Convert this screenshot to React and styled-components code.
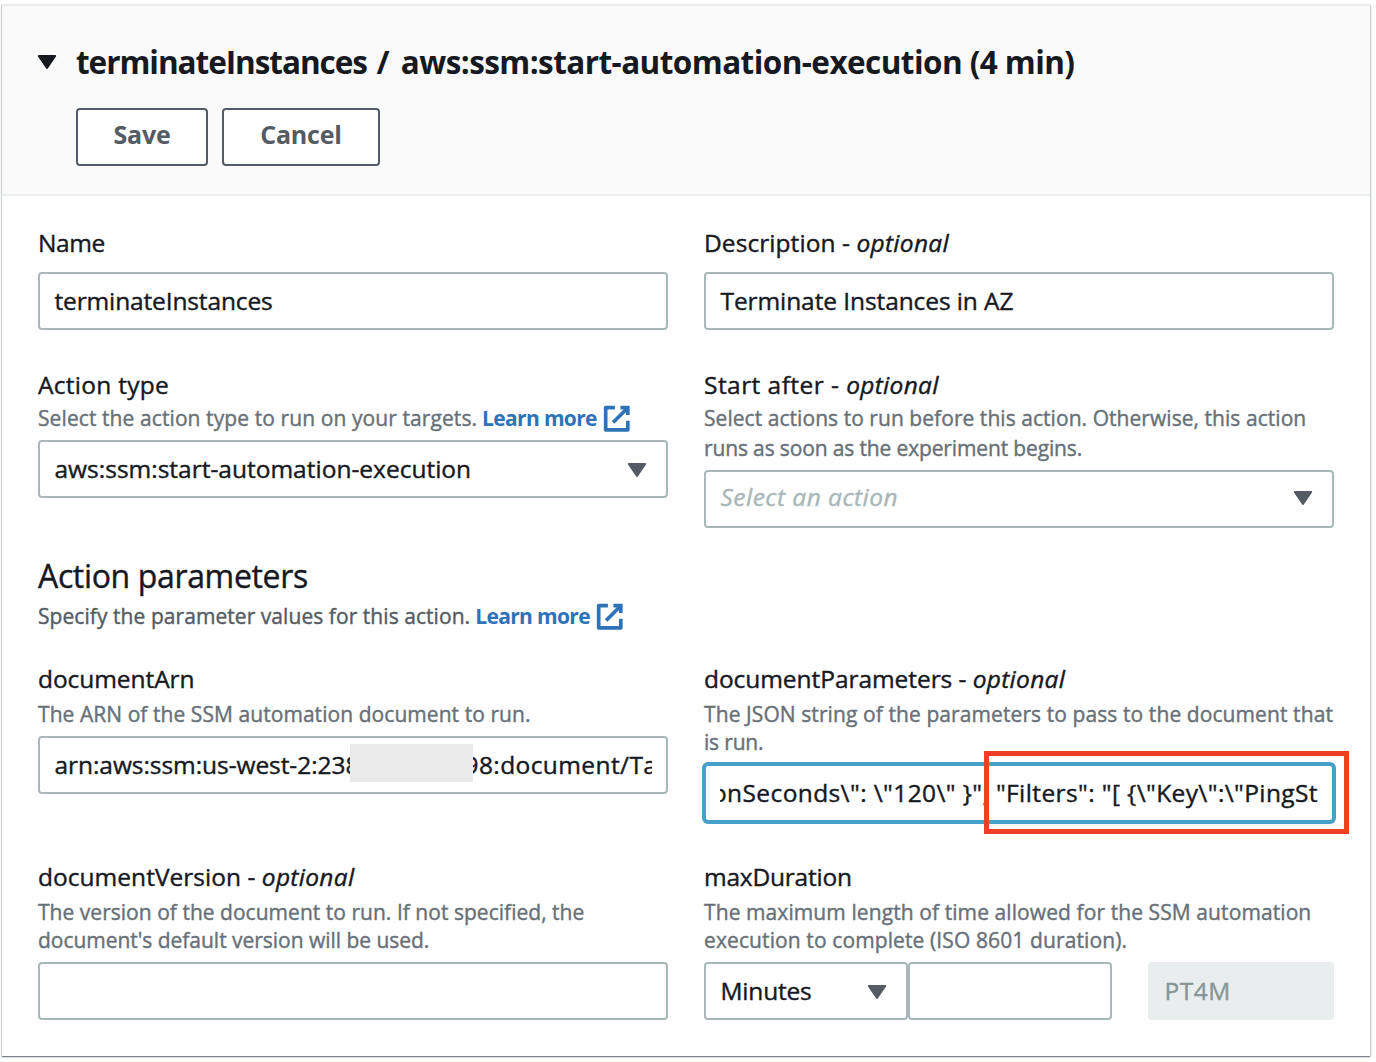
import React from 'react';
import styled, { createGlobalStyle } from 'styled-components';

const Global = createGlobalStyle`
  *, *::before, *::after { box-sizing: border-box; }
  body {
    margin: 0;
    background: #fff;
    color: #16191f;
    font-family: "Open Sans", "Noto Sans", sans-serif;
    -webkit-text-stroke: 0.4px;
  }
`;

const Page = styled.main`
  height: 1062px;
  padding: 4px 6px 6px 2px;
`;

const Card = styled.section`
  width: 1368px;
  height: 1052px;
  background: #fff;
  border-top: 2px solid #eaeded;
  box-shadow:
    0 1px 1px rgba(0, 28, 36, 0.35),
    1px 1px 2px rgba(0, 28, 36, 0.22),
    -1px 1px 1px rgba(0, 28, 36, 0.15);
`;

const Header = styled.header`
  display: flex;
  gap: 19px;
  height: 190px;
  padding: 33px 36px 28px 35px;
  background: #fafafa;
  border-bottom: 2px solid #eaeded;
`;

const HeaderMain = styled.div`
  display: flex;
  flex-direction: column;
  gap: 24px;
  padding-top: 1px;
`;

const Title = styled.h2`
  margin: 0;
  font-size: 31.5px;
  font-weight: 700;
  line-height: 44px;
  white-space: pre;
  -webkit-text-stroke: 0;
`;

const TitlePart = styled.span`
  letter-spacing: ${(p) => p.$ls}px;
`;

const Buttons = styled.div`
  display: flex;
  gap: 14px;
`;

const Button = styled.button`
  width: ${(p) => p.$width}px;
  height: 58px;
  padding: 0 0 6px;
  border: 2px solid #545b64;
  border-radius: 4px;
  background: #fff;
  color: #545b64;
  font: 700 25px "Open Sans", sans-serif;
  letter-spacing: -0.2px;
  -webkit-text-stroke: 0;
`;

const Body = styled.div`
  padding: 32px 36px 36px;
`;

const Row = styled.div`
  display: grid;
  grid-template-columns: 630px 630px;
  column-gap: 36px;
  margin-top: ${(p) => p.$gap || 0}px;
`;

const FieldBox = styled.div`
  display: flex;
  flex-direction: column;
`;

const Label = styled.div`
  height: 30px;
  font-size: 24.5px;
  line-height: 30px;
  letter-spacing: ${(p) => p.$ls || 0}px;
  white-space: pre;
`;

const Optional = styled.em`
  letter-spacing: 0.3px;
`;

const Hint = styled.div`
  margin: ${(p) => (p.$loose ? '3px 0 7px' : '6px 0 8px')};
  color: ${(p) => p.$color || '#687078'};
  font-size: 21px;
`;

const Line = styled.div`
  display: flex;
  align-items: center;
  height: ${(p) => p.$height}px;
  line-height: ${(p) => p.$height}px;
  letter-spacing: ${(p) => p.$ls || 0}px;
  white-space: pre;
`;

const Link = styled.a`
  display: flex;
  align-items: center;
  margin-left: 5px;
  color: #2e73b8;
  font-weight: 700;
  letter-spacing: -0.66px;
  -webkit-text-stroke: 0;

  svg {
    margin: 1px 0 0 5.5px;
  }
`;

const Control = styled.div`
  position: relative;
  display: flex;
  align-items: center;
  justify-content: space-between;
  width: ${(p) => (p.$width ? `${p.$width}px` : '100%')};
  height: 58px;
  margin-top: ${(p) => p.$top || 0}px;
  padding: 0 14px;
  border: 2px solid ${(p) => (p.$disabled ? '#eaeded' : p.$focused ? '#45a1c9' : '#aab7b8')};
  border-radius: 4px;
  background: ${(p) => (p.$disabled ? '#eaeded' : '#fff')};
  color: ${(p) => (p.$disabled ? '#879596' : 'inherit')};
  box-shadow: ${(p) => (p.$focused ? '0 0 0 2px #45a1c9' : 'none')};
`;

const Value = styled.div`
  display: flex;
  flex: 1;
  justify-content: ${(p) => (p.$end ? 'flex-end' : 'flex-start')};
  min-width: 0;
  height: 42px;
  margin-bottom: ${(p) => p.$lift || 1}px;
  overflow: hidden;
  font-size: 24.5px;
  line-height: 42px;
  letter-spacing: ${(p) => p.$ls || 0}px;
  text-indent: ${(p) => (p.$end ? 0 : 0.5)}px;
  white-space: pre;
`;

const Placeholder = styled.em`
  color: #aab7b8;
`;

const ArnStart = styled.span`
  flex: none;
  width: 295.5px;
  overflow: hidden;
  letter-spacing: -0.06px;
`;

const ArnEnd = styled.span`
  flex: none;
  margin-left: -8.5px;
  letter-spacing: 0.4px;
`;

const Redaction = styled.span`
  position: relative;
  z-index: 1;
  flex: none;
  width: 123px;
  height: 37.5px;
  margin-top: 0.5px;
  background: #eaeaea;
`;

const CaretBox = styled.span`
  display: flex;
  margin-right: 5px;
  margin-top: ${(p) => p.$shift}px;
`;

const HeaderCaret = styled.span`
  display: flex;
  padding-top: 15px;
  width: 20px;
  height: 31px;
`;

const Highlight = styled.div`
  position: absolute;
  top: -15px;
  left: 277.5px;
  width: 365.5px;
  height: 83px;
  border: 5px solid #ee4026;
`;

const SectionTitle = styled.h3`
  margin: 28px 0 0;
  font-size: 32px;
  font-weight: 400;
  line-height: 40px;
  letter-spacing: -0.35px;
`;

const SectionHint = styled(Hint)`
  margin: 5px 0 0;
`;

const Duration = styled.div`
  display: flex;
`;

const DurationPreview = styled.div`
  margin-left: 36px;
`;

const Caret = ({ color = '#545b64' }) => (
  <svg width="20" height="16" viewBox="0 0 20 16">
    <path d="M1.8 2h16.4L10 14z" fill={color} stroke={color} strokeWidth="2" strokeLinejoin="round" />
  </svg>
);

const External = () => (
  <svg width="29.5" height="29.5" viewBox="0 0 16 16" fill="none" stroke="#2e73b8" strokeWidth="2">
    <path d="M10 2h4v4" />
    <path d="M6 10l8-8" />
    <path d="M14 9.048V14H2V2h5" strokeLinejoin="round" />
  </svg>
);

const LearnMore = () => (
  <Link>
    Learn more
    <External />
  </Link>
);

function Field({ label, ls, optional, hint, loose, children }) {
  return (
    <FieldBox>
      <Label $ls={ls}>
        {label}
        {optional && <> - <Optional>optional</Optional></>}
      </Label>
      {hint && (
        <Hint $loose={loose}>
          {hint.map(([text, spacing, link]) => (
            <Line key={text} $height={loose ? 30 : 28} $ls={spacing}>
              {text}
              {link && <LearnMore />}
            </Line>
          ))}
        </Hint>
      )}
      {children}
    </FieldBox>
  );
}

export default function App() {
  return (
    <Page>
      <Global />
      <Card>
        <Header>
          <HeaderCaret><Caret color="#16191f" /></HeaderCaret>
          <HeaderMain>
            <Title>
              <TitlePart $ls={-1.05}>terminateInstances</TitlePart>
              <TitlePart $ls={1.5}>{' / '}</TitlePart>
              <TitlePart $ls={-0.57}>aws:ssm:start-automation-execution (4 min)</TitlePart>
            </Title>
            <Buttons>
              <Button $width={132}>Save</Button>
              <Button $width={158}>Cancel</Button>
            </Buttons>
          </HeaderMain>
        </Header>
        <Body>
          <Row>
            <Field label="Name" ls={-0.41}>
              <Control $top={14}><Value $ls={-0.14}>terminateInstances</Value></Control>
            </Field>
            <Field label="Description" ls={0.07} optional>
              <Control $top={14}><Value $ls={-0.09}>Terminate Instances in AZ</Value></Control>
            </Field>
          </Row>
          <Row $gap={40}>
            <Field
              label="Action type"
              ls={0.27}
              loose
              hint={[['Select the action type to run on your targets.', 0.09, true]]}
            >
              <Control>
                <Value $ls={0}>aws:ssm:start-automation-execution</Value>
                <CaretBox $shift={2}><Caret /></CaretBox>
              </Control>
            </Field>
            <Field
              label="Start after"
              ls={0.45}
              optional
              loose
              hint={[
                ['Select actions to run before this action. Otherwise, this action', 0.05],
                ['runs as soon as the experiment begins.', -0.14],
              ]}
            >
              <Control>
                <Value $ls={0.48} $lift={5}><Placeholder>Select an action</Placeholder></Value>
                <CaretBox $shift={-2}><Caret /></CaretBox>
              </Control>
            </Field>
          </Row>
          <SectionTitle>Action parameters</SectionTitle>
          <SectionHint $color="#545b64">
            <Line $height={30} $ls={0.06}>
              Specify the parameter values for this action.
              <LearnMore />
            </Line>
          </SectionHint>
          <Row $gap={33}>
            <Field
              label="documentArn"
              ls={-0.07}
              hint={[['The ARN of the SSM automation document to run.', 0.06]]}
            >
              <Control>
                <Value>
                  <ArnStart>arn:aws:ssm:us-west-2:238</ArnStart>
                  <Redaction />
                  <ArnEnd>98:document/Ta</ArnEnd>
                </Value>
              </Control>
            </Field>
            <Field
              label="documentParameters"
              ls={-0.06}
              optional
              hint={[
                ['The JSON string of the parameters to pass to the document that', 0.09],
                ['is run.', -0.18],
              ]}
            >
              <Control $focused>
                <Value $ls={0.39} $end>{'onSeconds\\": \\"120\\" }", "Filters": "[ {\\"Key\\":\\"PingSt'}</Value>
                <Highlight />
              </Control>
            </Field>
          </Row>
          <Row $gap={40}>
            <Field
              label="documentVersion"
              ls={0.028}
              optional
              hint={[
                ['The version of the document to run. If not specified, the', 0.026],
                ["document's default version will be used.", -0.03],
              ]}
            >
              <Control />
            </Field>
            <Field
              label="maxDuration"
              ls={-0.22}
              hint={[
                ['The maximum length of time allowed for the SSM automation', 0.09],
                ['execution to complete (ISO 8601 duration).', 0.11],
              ]}
            >
              <Duration>
                <Control $width={204}>
                  <Value $ls={-0.2}>Minutes</Value>
                  <CaretBox $shift={2}><Caret /></CaretBox>
                </Control>
                <Control $width={204} />
                <DurationPreview>
                  <Control $width={186} $disabled><Value $ls={0.5}>PT4M</Value></Control>
                </DurationPreview>
              </Duration>
            </Field>
          </Row>
        </Body>
      </Card>
    </Page>
  );
}
